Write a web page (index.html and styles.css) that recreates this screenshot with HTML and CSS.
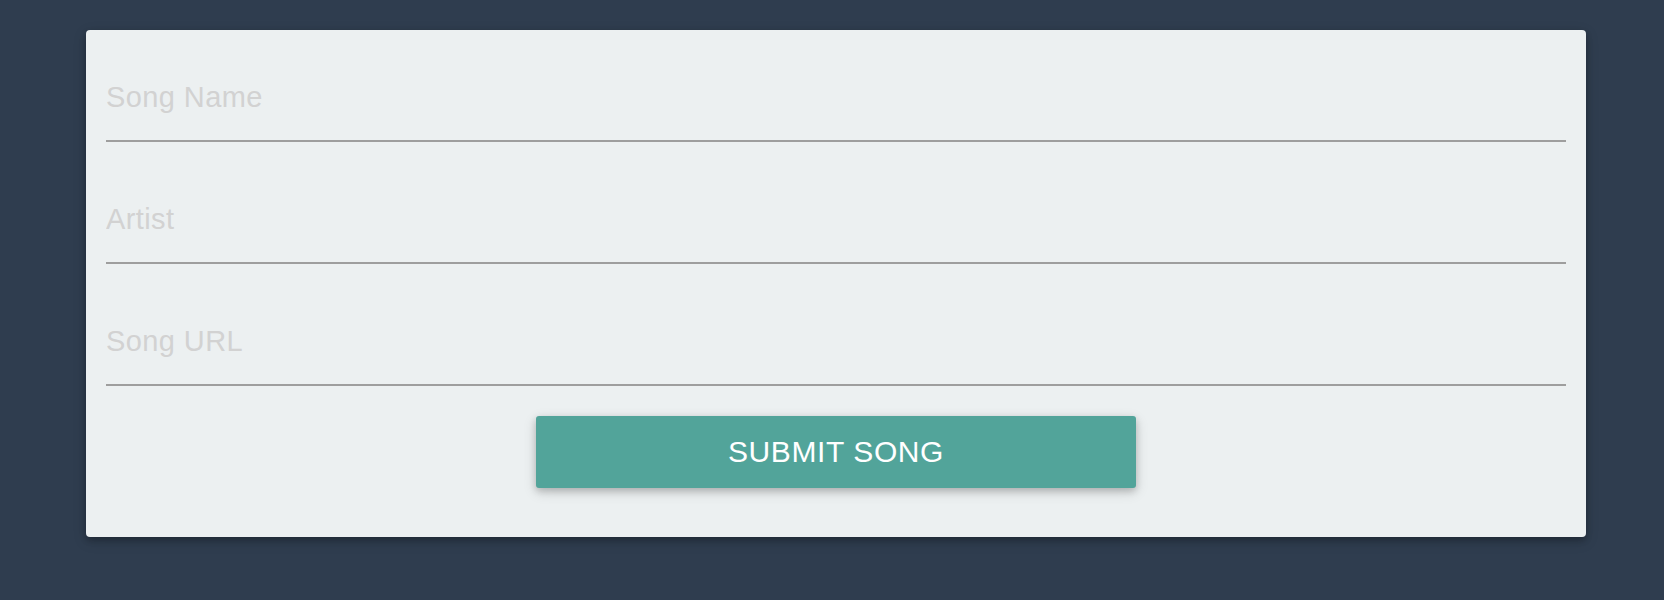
FILE: index.html
```html
<!DOCTYPE html>
<html lang="en">
<head>
<meta charset="utf-8">
<title>Submit Song</title>
<link rel="stylesheet" href="styles.css">
</head>
<body>
  <main class="page">
    <form class="card">
      <input class="field" type="text" placeholder="Song Name">
      <input class="field" type="text" placeholder="Artist">
      <input class="field" type="text" placeholder="Song URL">
      <div class="actions">
        <button class="submit" type="button">SUBMIT SONG</button>
      </div>
    </form>
  </main>
</body>
</html>
```
FILE: styles.css
```css
html, body {
  margin: 0;
  padding: 0;
}
body {
  background: #2f3d4f;
  font-family: "Liberation Sans", Arial, sans-serif;
  min-height: 600px;
}
.page {
  padding: 30px 78px 0 86px;
}
.card {
  width: 1500px;
  box-sizing: border-box;
  background: #ecf0f1;
  border-radius: 4px;
  padding: 0 20px 49px;
  display: flex;
  flex-direction: column;
  gap: 10px;
  box-shadow: 0 3px 6px rgba(0,0,0,0.22), 0 4px 14px rgba(0,0,0,0.16);
}
.field {
  display: block;
  width: 100%;
  box-sizing: border-box;
  height: 112px;
  padding: 51px 0 27px;
  margin: 0;
  border: none;
  border-bottom: 2px solid #9e9e9e;
  background: transparent;
  outline: none;
  font-family: "Liberation Sans", Arial, sans-serif;
  font-size: 29px;
  line-height: 32px;
  letter-spacing: 0.4px;
  color: #333;
}
.field::placeholder {
  color: #d2d2d2;
}
.actions {
  display: flex;
  justify-content: center;
  padding-top: 20px;
}
.submit {
  width: 600px;
  height: 72px;
  border: none;
  border-radius: 3px;
  background: #52a49a;
  color: #ffffff;
  font-family: "Liberation Sans", Arial, sans-serif;
  font-size: 30px;
  letter-spacing: 0.6px;
  padding: 0;
  cursor: pointer;
  box-shadow: 0 3px 7px rgba(0,0,0,0.18), 0 4px 14px rgba(0,0,0,0.14);
}
```
